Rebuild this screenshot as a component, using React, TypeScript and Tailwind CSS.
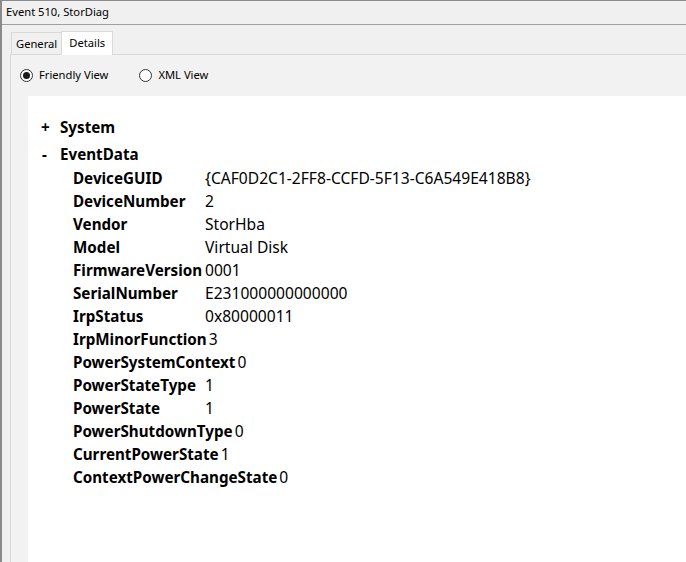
const rows: [string, string][] = [
  ["DeviceGUID", "{CAF0D2C1-2FF8-CCFD-5F13-C6A549E418B8}"],
  ["DeviceNumber", "2"],
  ["Vendor", "StorHba"],
  ["Model", "Virtual Disk"],
  ["FirmwareVersion", "0001"],
  ["SerialNumber", "E231000000000000"],
  ["IrpStatus", "0x80000011"],
  ["IrpMinorFunction", "3"],
  ["PowerSystemContext", "0"],
  ["PowerStateType", "1"],
  ["PowerState", "1"],
  ["PowerShutdownType", "0"],
  ["CurrentPowerState", "1"],
  ["ContextPowerChangeState", "0"],
];

function Radio({ checked, label }: { checked?: boolean; label: string }) {
  return (
    <label className="flex items-center gap-[6px]">
      <span className="flex h-[13px] w-[13px] items-center justify-center rounded-full border border-[#333333] bg-white">
        {checked && <span className="h-[7px] w-[7px] rounded-full bg-[#1a1a1a]" />}
      </span>
      <span>{label}</span>
    </label>
  );
}

export default function App() {
  return (
    <div
      className="flex h-[562px] w-[686px] flex-col overflow-hidden border-l-2 border-t border-[#8a8a8a] bg-[#f0f0f0] text-[11.2px] text-black"
      style={{ fontFamily: '"Noto Sans", "Open Sans", sans-serif' }}
    >
      {/* title */}
      <div className="flex h-[24px] items-center border-b border-[#a0a0a0] pl-[4px]">
        Event 510, StorDiag
      </div>

      {/* tabs */}
      <div className="ml-[8px] mt-[6px] flex flex-1 flex-col">
        <div className="relative z-10 flex items-end pl-[1px]">
          <div className="flex h-[22px] items-center border-l border-t border-[#d9d9d9] bg-[#f0f0f0] px-[4px] pt-[2px]">
            General
          </div>
          <div className="-mb-px flex h-[24px] items-start border-x border-t border-[#d9d9d9] bg-white px-[7px] pt-[3px]">
            Details
          </div>
        </div>
        <div className="flex flex-1 flex-col border-l border-t border-[#d9d9d9] bg-[#f2f2f2]">
          <div className="flex h-[41px] items-center gap-[31px] pl-[9px]">
            <Radio checked label="Friendly View" />
            <Radio label="XML View" />
          </div>

          <div className="ml-[17px] flex-1 bg-white pt-[18px] text-[15.6px]">
            <div className="flex h-[27px] items-center text-[15.2px] font-bold">
              <span className="w-[32px] pl-[13px]">+</span>
              <span>System</span>
            </div>
            <div className="flex h-[26px] items-center text-[15.2px] font-bold">
              <span className="w-[32px] pl-[14px]">-</span>
              <span>EventData</span>
            </div>
            <div className="pl-[45px]">
              {rows.map(([k, v]) => (
                <div key={k} className="flex h-[23px] items-center">
                  <span className="min-w-[132px] pr-[2px] text-[15.2px] font-bold">{k}</span>
                  <span>{v}</span>
                </div>
              ))}
            </div>
          </div>
        </div>
      </div>
    </div>
  );
}
